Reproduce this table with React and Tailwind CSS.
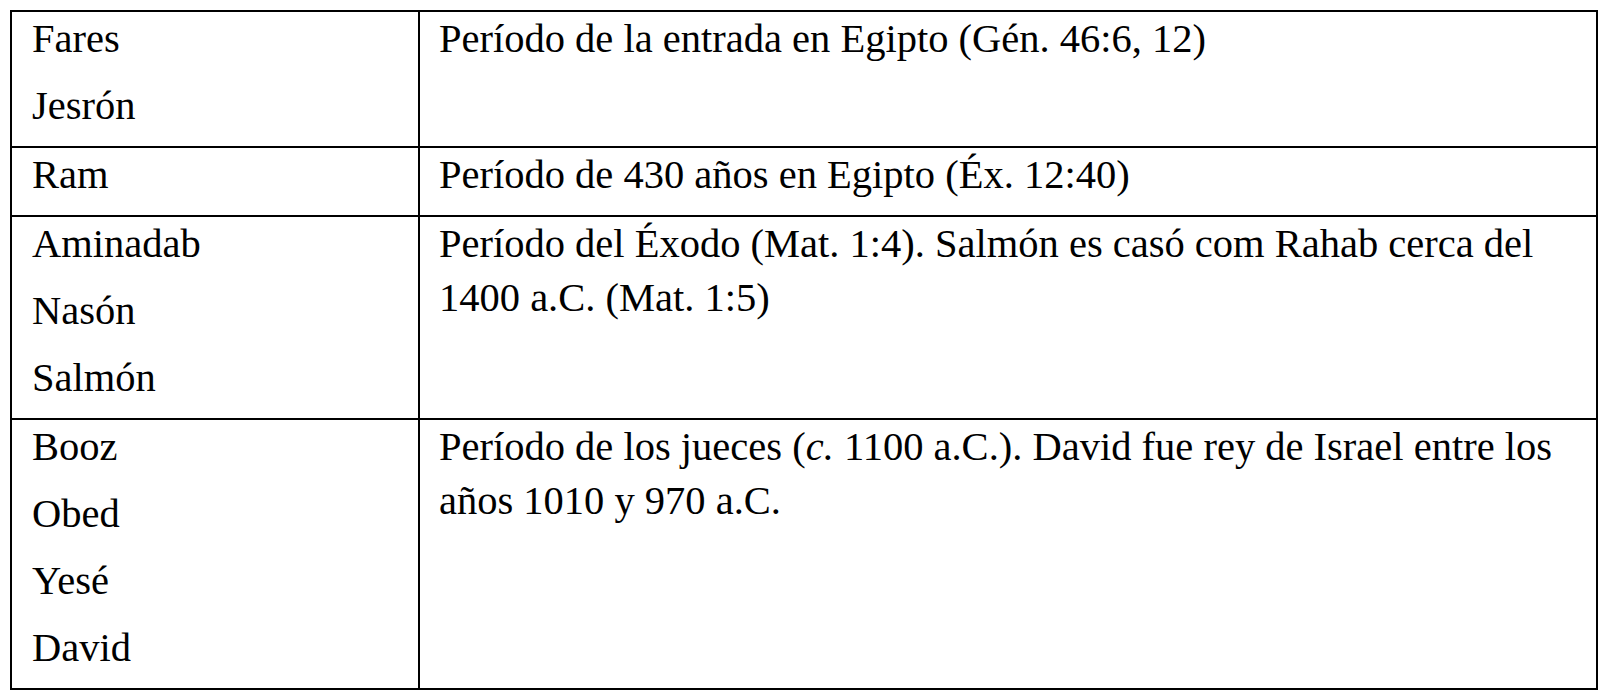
const rows = [
  {
    names: ['Fares', 'Jesrón'],
    text: <>Período de la entrada en Egipto (Gén. 46:6, 12)</>,
  },
  {
    names: ['Ram'],
    text: <>Período de 430 años en Egipto (Éx. 12:40)</>,
  },
  {
    names: ['Aminadab', 'Nasón', 'Salmón'],
    text: <>Período del Éxodo (Mat. 1:4). Salmón es casó com Rahab cerca del 1400 a.C. (Mat. 1:5)</>,
  },
  {
    names: ['Booz', 'Obed', 'Yesé', 'David'],
    text: (
      <>
        Período de los jueces (<i>c.</i> 1100 a.C.). David fue rey de Israel entre los años 1010 y 970 a.C.
      </>
    ),
  },
]

export default function App() {
  return (
    <div className="min-h-screen bg-white pt-[10px] pl-[10px] text-black font-['Liberation_Serif','Times_New_Roman',serif] text-[40.5px] leading-[54px]">
      <div className="w-[1588px] border-2 border-black">
        {rows.map((row, i) => (
          <div key={i} className={'flex ' + (i > 0 ? 'border-t-2 border-black' : '')}>
            <div className="w-[408px] shrink-0 border-r-2 border-black px-[20px]">
              {row.names.map((n) => (
                <p key={n} className="mb-[13px]">{n}</p>
              ))}
            </div>
            <div className="flex-1 pl-[19px] pr-[20px]">
              <p>{row.text}</p>
            </div>
          </div>
        ))}
      </div>
    </div>
  )
}
